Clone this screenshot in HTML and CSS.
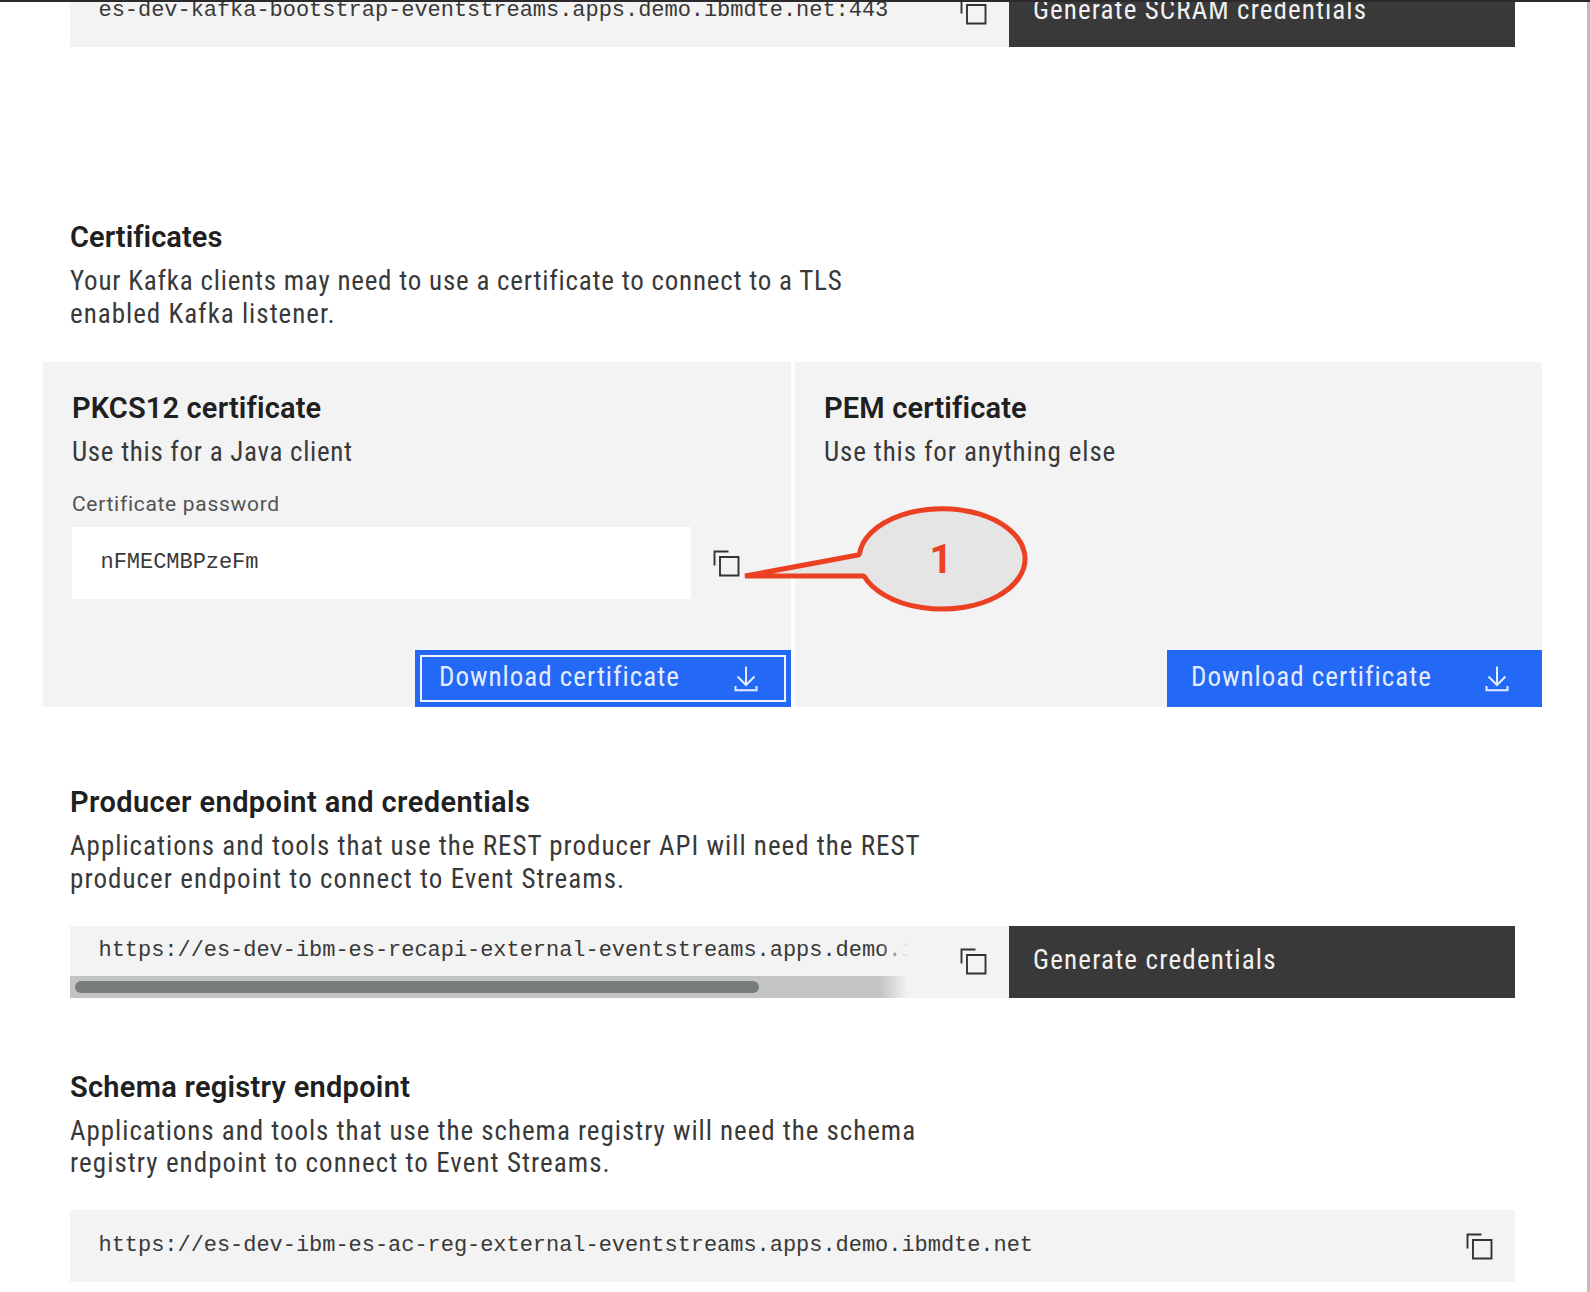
FILE: index.html
```
<!DOCTYPE html>
<html lang="en">
<head>
<meta charset="utf-8">
<title>Event Streams connection details</title>
<link rel="stylesheet" href="styles.css">
</head>
<body>
<svg class="symbols" aria-hidden="true">
  <symbol id="copy" viewBox="0 0 27 27">
    <path d="M1.5 15.5V1.5H15.5M7 7H25.5V25.5H7Z" fill="none" stroke="currentColor" stroke-width="1.9"/>
  </symbol>
  <symbol id="download" viewBox="0 0 24 26">
    <path d="M12 0.500V18.500M3.500 10.500L12 19L20.500 10.500M1.500 20V24.300H22.500V20" fill="none" stroke="currentColor" stroke-width="2"/>
  </symbol>
</svg>
<main class="page">
  <div class="row row-top">
    <div class="endpoint"><code class="code">es-dev-kafka-bootstrap-eventstreams.apps.demo.ibmdte.net:443</code></div>
    <svg class="copy"><use href="#copy"/></svg>
    <button class="generate scram">Generate SCRAM credentials</button>
  </div>

  <section class="section certificates">
    <h2 class="heading tight">Certificates</h2>
    <p class="text"><span class="line">Your Kafka clients may need to use a certificate to connect to a TLS</span> <span class="line loose">enabled Kafka listener.</span></p>
  </section>

  <div class="cards">
    <article class="card">
      <h3 class="heading">PKCS12 certificate</h3>
      <p class="text java">Use this for a Java client</p>
      <p class="label">Certificate password</p>
      <div class="password">
        <div class="field"><code class="code">nFMECMBPzeFm</code></div>
        <svg class="copy"><use href="#copy"/></svg>
      </div>
      <button class="download focused"><span>Download certificate</span><svg class="arrow"><use href="#download"/></svg></button>
    </article>
    <article class="card">
      <h3 class="heading">PEM certificate</h3>
      <p class="text other">Use this for anything else</p>
      <button class="download"><span>Download certificate</span><svg class="arrow"><use href="#download"/></svg></button>
    </article>
    <svg class="callout" viewBox="0 0 290 114">
      <path d="M119.300 53.700A83 50.200 0 1 1 124 75L5 75Z" fill="#e5e5e5" stroke="#ec4023" stroke-width="5" stroke-linejoin="bevel"/>
      <text x="201" y="72" text-anchor="middle" class="callout-number">1</text>
    </svg>
  </div>

  <section class="section producer">
    <h2 class="heading wide">Producer endpoint and credentials</h2>
    <p class="text loose"><span class="line">Applications and tools that use the REST producer API will need the REST</span> <span class="line looser">producer endpoint to connect to Event Streams.</span></p>
  </section>
  <div class="row">
    <div class="endpoint scrolling">
      <code class="code">https://es-dev-ibm-es-recapi-external-eventstreams.apps.demo.ibmdte.net</code>
      <div class="track"><div class="thumb"></div></div>
    </div>
    <svg class="copy"><use href="#copy"/></svg>
    <button class="generate">Generate credentials</button>
  </div>

  <section class="section schema">
    <h2 class="heading">Schema registry endpoint</h2>
    <p class="text loose"><span class="line">Applications and tools that use the schema registry will need the schema</span> <span class="line looser">registry endpoint to connect to Event Streams.</span></p>
  </section>
  <div class="row row-last">
    <div class="endpoint"><code class="code">https://es-dev-ibm-es-ac-reg-external-eventstreams.apps.demo.ibmdte.net</code></div>
    <svg class="copy"><use href="#copy"/></svg>
  </div>
  <div class="top-edge"></div>
  <div class="right-edge"></div>
</main>
</body>
</html>
```
FILE: styles.css
```
* { box-sizing: border-box; }
body { margin: 0; background: #fff; }
h2, h3, p { margin: 0; }
.symbols { position: absolute; width: 0; height: 0; }

.page {
  position: relative;
  display: flow-root;
  width: 1590px;
  height: 1292px;
  overflow: hidden;
  color: #393939;
  font-family: "Roboto Condensed", Roboto, sans-serif;
}
.top-edge { position: absolute; top: 0; left: 0; right: 0; height: 2px; background: #2c2a2c; }
.right-edge { position: absolute; top: 2px; right: 0; bottom: 0; width: 3px; background: #bdbdbd; }

.heading {
  font: 600 29px/36px Roboto, sans-serif;
  letter-spacing: .15px;
  color: #202020;
  white-space: nowrap;
}
.heading.tight { letter-spacing: .05px; }
.heading.wide { letter-spacing: .4px; }
.schema .heading { letter-spacing: .27px; }
.text { font-size: 27px; line-height: 32.5px; letter-spacing: .78px; white-space: nowrap; }
.text.java { letter-spacing: .7px; }
.text.other { letter-spacing: .87px; }
.loose { letter-spacing: 1px; }
.looser { letter-spacing: 1.060px; }
.schema .text { letter-spacing: .960px; }
.line { display: block; width: max-content; }
.section { padding-left: 70px; }
.section .text { margin-top: 10px; }
.certificates { margin: 172px 0 32px; }
.producer { margin: 77px 0 30.500px; }
.schema { margin: 71px 0 30.500px; }

.row {
  display: flex;
  align-items: center;
  width: 1445px;
  height: 72px;
  margin-left: 70px;
  background: #f3f3f3;
}
.row-top { margin-top: -25px; }
.row-last { padding-right: 22px; }
.row > .copy { margin-right: 22px; }
.row-last > .copy { margin-right: 0; }
.endpoint { flex: 1; min-width: 0; padding-left: 28.500px; }
.code {
  font: 22px/30px "Liberation Mono", monospace;
  letter-spacing: -.04px;
  white-space: nowrap;
}
.scrolling {
  position: relative;
  flex: 0 0 838px;
  align-self: stretch;
  display: flex;
  flex-direction: column;
  justify-content: space-between;
  margin-right: auto;
  padding: 10px 0 0;
  overflow: hidden;
}
.scrolling .code { padding-left: 28.500px; }
.scrolling::after {
  content: "";
  position: absolute;
  inset: 0 0 0 auto;
  width: 28px;
  background: linear-gradient(to right, rgba(243, 243, 243, 0), #f3f3f3);
}
.track { height: 21.500px; padding: 5px; background: #c3c5c4; }
.thumb { width: 684px; height: 11.500px; border-radius: 6px; background: #797c7c; }
.copy { flex: none; width: 27px; height: 27px; color: #333; }

button { border: 0; font: 27px/32px "Roboto Condensed", Roboto, sans-serif; text-align: left; white-space: nowrap; }
.generate {
  width: 506px;
  height: 72px;
  padding: 0 24px 4px;
  background: #393939;
  color: #f1f1f1;
  letter-spacing: 1.200px;
}
.generate.scram { padding-bottom: 2px; letter-spacing: 1.100px; }

.cards {
  position: relative;
  display: grid;
  grid-template-columns: 748px 747px;
  column-gap: 4px;
  height: 345px;
  margin-left: 43px;
}
.card { display: flex; flex-direction: column; padding: 28px 0 0 29px; background: #f3f3f3; }
.card .text { margin-top: 9.500px; }
.label {
  margin-top: 23px;
  font: 21px/26px Roboto, sans-serif;
  letter-spacing: .7px;
  color: #525252;
}
.password { display: flex; align-items: center; gap: 22px; margin-top: 10px; }
.field { display: flex; align-items: center; width: 619px; height: 72px; padding-left: 28.500px; background: #fff; }
.download {
  display: flex;
  align-items: center;
  justify-content: space-between;
  width: 375px;
  height: 57px;
  margin: auto 0 0 auto;
  padding: 0 33px 3px 24px;
  background: #2468f6;
  color: #e3ecff;
  letter-spacing: 1px;
}
.download.focused { width: 376px; outline: 2px solid #eef3ff; outline-offset: -7px; }
.arrow { width: 24px; height: 26px; margin-top: 4px; }

.callout { position: absolute; left: 697px; top: 139px; width: 290px; height: 114px; }
.callout-number { font: bold 40px Roboto, sans-serif; fill: #ec4023; }
```
